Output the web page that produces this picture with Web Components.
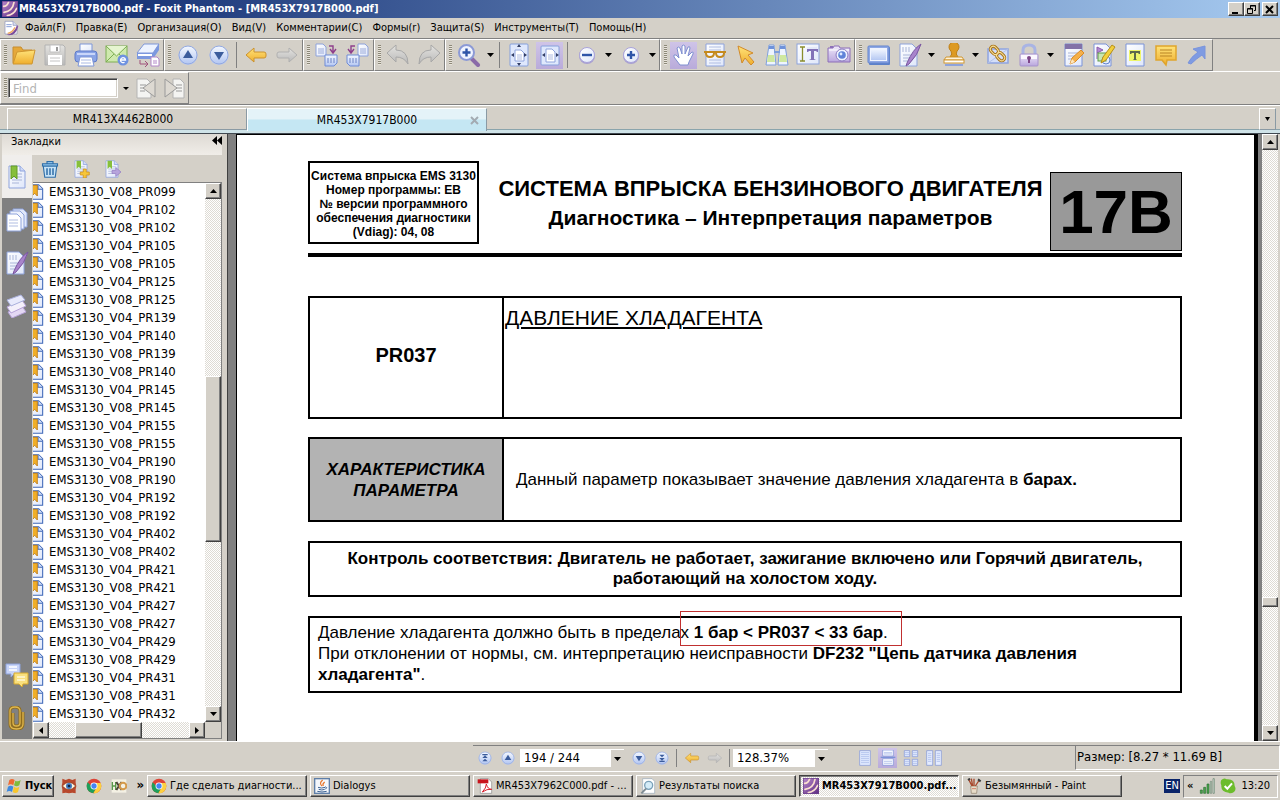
<!DOCTYPE html>
<html lang="ru">
<head>
<meta charset="utf-8">
<title>MR453X7917B000.pdf - Foxit Phantom</title>
<style>
    html, body {
        height: 100%;
    }
    body {
        margin: 0;
        overflow: hidden;
        font: 11px/14px "DejaVu Sans Condensed", "Open Sans", sans-serif;
        color: #000;
        background: #d4d0c8;
        --face: #d4d0c8;
        --shade: #808080;
        --dark: #404040;
    }
</style>
</head>
<body>
<pdf-app></pdf-app>

<script>
const DEFS = `
    <defs>
        <linearGradient id="gold" x1="0" y1="0" x2="0" y2="1"><stop offset="0" stop-color="#ffe37a"/><stop offset="1" stop-color="#efae2e"/></linearGradient>
        <linearGradient id="blue" x1="0" y1="0" x2="0" y2="1"><stop offset="0" stop-color="#f4f8ff"/><stop offset="1" stop-color="#b3c6f2"/></linearGradient>
        <linearGradient id="paper" x1="0" y1="0" x2="1" y2="1"><stop offset="0" stop-color="#fff"/><stop offset="1" stop-color="#dfe7fa"/></linearGradient>
        <linearGradient id="grey" x1="0" y1="0" x2="0" y2="1"><stop offset="0" stop-color="#e4e3e0"/><stop offset="1" stop-color="#b9b9b9"/></linearGradient>
        <linearGradient id="violet" x1="0" y1="0" x2="1" y2="1"><stop offset="0" stop-color="#b98acb"/><stop offset="1" stop-color="#5b2a80"/></linearGradient>
        <linearGradient id="lilac" x1="0" y1="0" x2="0" y2="1"><stop offset="0" stop-color="#f0eafb"/><stop offset="1" stop-color="#b9a6dd"/></linearGradient>
    </defs>`;

const SHEET = `<path d="M4 1h11l5 5v17H4z" fill="url(#paper)" stroke="#8ea3dc"/><path d="M15 1v5h5" fill="#cfdaf7" stroke="#8ea3dc"/>`;
const LINES = `<path d="M7 9h10M7 12h10M7 15h10M7 18h7" stroke="#a9b5d8"/>`;
const ROUND = `<circle cx="12" cy="12.500" r="9.500" fill="#b9c8ef"/><circle cx="12" cy="12" r="9" fill="url(#blue)" stroke="#93a9e0"/>`;
const CHROME = `<circle cx="12" cy="12" r="11" fill="#dd4437"/><path d="M2.500 6.500A11 11 0 0 0 11 23l5-9-7-1z" fill="#1ea05a"/><path d="M11 23A11 11 0 0 0 22 7.500H12l4.500 6z" fill="#fcd040"/><circle cx="12" cy="12" r="5.200" fill="#fff"/><circle cx="12" cy="12" r="4" fill="#4385f5"/>`;

const ICONS = {
    foxit: `<rect width="24" height="24" fill="url(#violet)"/><path d="M2 8Q8 8 10 1M3 17Q16 15 18 2M8 22Q18 20 22 11" fill="none" stroke="#fbe0d0" stroke-width="2.500" stroke-linecap="round"/><rect x=".500" y=".500" width="23" height="23" stroke="#6b3f8c"/>`,
    foxitDoc: `<path d="M3 2h12l6 6v13H3z" fill="#fff" stroke="#8a8fb5"/><path d="M15 2v6h6" fill="#d6dcf0" stroke="#8a8fb5"/><path d="M5 7h8M5 10h8" stroke="#8aa0d8" stroke-width="1.500"/><path d="M5 22Q16 22 21 8l2 1Q20 23 9 23z" fill="url(#violet)"/><path d="M7 20Q14 19 18 11" fill="none" stroke="#f0a860" stroke-width="2"/>`,
    open: `<path d="M1 20V4h8l2 3h9v13z" fill="#e5a83a" stroke="#c78c2e"/><path d="M1 21L5 9l18-2-3 14z" fill="url(#gold)" stroke="#cf9630"/>`,
    save: `<path d="M2 2h18l2 2v18H2z" fill="url(#grey)" stroke="#b2b2b2"/><path d="M7 2h10v7H7z" fill="#fff" stroke="#c0c0c0"/><path d="M13 4h2v4h-2z" fill="#999"/><path d="M5 12h14v10H5z" fill="#fff"/><path d="M7 15h10M7 18h10" stroke="#c4c4c4"/>`,
    print: `<path d="M6 1h12v9H6z" fill="url(#paper)" stroke="#7f97d8"/><rect x="1" y="8" width="22" height="11" rx="3" fill="#8aa4e6" stroke="#5d79c8"/><path d="M3 11h18" stroke="#c9d6fa" stroke-width="2"/><path d="M6 14h12l2 9H4z" fill="#fff" stroke="#7f97d8"/><path d="M7 17h10M7 20h10" stroke="#a9b9e4"/>`,
    mail: `<rect x="1" y="3" width="21" height="16" fill="#cfe9ae" stroke="#7cae52"/><path d="M1 3l10.500 10L22 3M1 19l8-8M22 19l-8-8" fill="#e6f5d0" stroke="#7cae52"/><circle cx="18" cy="17" r="5.500" fill="#6f92e0"/><path d="M15.500 17h5a2.500 2.500 0 1 0-1 2.200" fill="none" stroke="#fff" stroke-width="1.300"/>`,
    scan: `<path d="M1 10L8 1h15l-6 9z" fill="#edf3ff" stroke="#7f97d8"/><path d="M1 10h16l6-9v6l-6 9H1z" fill="#7c98df"/><path d="M2 12h14" stroke="#fff" stroke-width="2"/><path d="M4 17v4h8m-3-3l3 3-3 3" fill="none" stroke="#a0527a"/><path d="M15 14h6l2 2v7h-8z" fill="#fff" stroke="#b287c9"/><path d="M17 18h4M17 20h4" stroke="#b287c9"/>`,
    up: ROUND + `<path d="M12 7l5 8H7z" fill="#3b5c9c"/>`,
    down: ROUND + `<path d="M12 17l5-8H7z" fill="#3b5c9c"/>`,
    first: ROUND + `<path d="M8 6h8v2H8zM12 8l4 4H8zM12 13l4 4H8z" fill="#3b5c9c"/>`,
    last: ROUND + `<path d="M8 16h8v2H8zM12 16l4-4H8zM12 11l4-4H8z" fill="#3b5c9c"/>`,
    back: `<path d="M2 12l8-7v4h10q2 0 2 2v2q0 2-2 2H10v4z" fill="url(#gold)" stroke="#cb922f"/>`,
    forward: `<path d="M22 12l-8-7v4H4q-2 0-2 2v2q0 2 2 2h10v4z" fill="url(#grey)" stroke="#b0b0b0"/>`,
    copyOut: `<path d="M1 1h7l3 3v9H1z" fill="url(#paper)" stroke="#8ea3dc"/><path d="M3 6h6M3 8h6M3 10h6" stroke="#9aaada"/><path d="M14 3h4v6m-3-3l3 4 3-4" fill="none" stroke="#8e3f8c" stroke-width="1.400"/><path d="M10 12h12v8l-3 3h-9z" fill="url(#blue)" stroke="#6f8bd6"/><path d="M13 15v5M16 15v5M19 15v5" stroke="#6c82c4"/>`,
    copyIn: `<path d="M12 1h7l3 3v9H12z" fill="url(#paper)" stroke="#8ea3dc"/><path d="M14 6h6M14 8h6M14 10h6" stroke="#9aaada"/><path d="M9 3H5v6M2 6l3 4 3-4" fill="none" stroke="#8e3f8c" stroke-width="1.400"/><path d="M1 12h12v11H4l-3-3z" fill="url(#blue)" stroke="#6f8bd6"/><path d="M4 15v5M7 15v5M10 15v5" stroke="#6c82c4"/>`,
    undo: `<path d="M1 10l9-8v5q12 0 12 14-4-7-12-7v5z" fill="url(#grey)" stroke="#a8a8a8"/>`,
    redo: `<path d="M23 10l-9-8v5Q2 7 2 21q4-7 12-7v5z" fill="url(#grey)" stroke="#a8a8a8"/>`,
    zoom: `<path d="M14 15l7 7" stroke="#8a6aa8" stroke-width="4" stroke-linecap="round"/><circle cx="9.500" cy="9.500" r="7.500" fill="#f0f4ff" stroke="#8c9ad6" stroke-width="2"/><path d="M9.500 5.500v8M5.500 9.500h8" stroke="#2f55a8" stroke-width="2.400"/>`,
    fitPage: `<rect x="3" y="1" width="18" height="22" rx="1" fill="#dfe8fc" stroke="#86a0dc"/><path d="M8 7h6l3 3v8H8z" fill="#fff" stroke="#8ea3dc"/><path d="M10 12h5M10 14h5M10 16h5" stroke="#b0bde2"/><path d="M12 1l2 3h-4zM12 23l2-3h-4zM4 12l3-2v4zM20 12l-3-2v4z" fill="#333f66"/>`,
    fitWidth: `<rect x="3" y="3" width="18" height="19" rx="1" fill="#dfe8fc" stroke="#86a0dc"/><path d="M8 6h6l3 3v10H8z" fill="#fff" stroke="#8ea3dc"/><path d="M10 12h5M10 14h5M10 16h5" stroke="#b0bde2"/><path d="M4 12l3-2v4zM21 12l-3-2v4z" fill="#333f66"/>`,
    minus: `<circle cx="12" cy="13" r="8" fill="#a89fd0"/><circle cx="12" cy="12" r="7.500" fill="url(#paper)" stroke="#a9a3da"/><path d="M7 12h10" stroke="#2f55a8" stroke-width="2.400"/>`,
    plus: `<circle cx="12" cy="13" r="8" fill="#a89fd0"/><circle cx="12" cy="12" r="7.500" fill="url(#paper)" stroke="#a9a3da"/><path d="M8 12h8M12 8v8" stroke="#2f55a8" stroke-width="2.400"/>`,
    hand: `<path d="M8 22L2 14q-1-3 2-2l3 3L5 5q1-2 3 0l2 6V3q1-2 3 0v8l3-7q2-1 2 1l-2 8 4-4q2 0 1 2l-4 8-1 3z" fill="#fff" stroke="#7e8fd0"/>`,
    glasses: `<path d="M3 1h18v22H3z" fill="url(#paper)" stroke="#8ea3dc"/><path d="M6 4h12M6 7h12M6 17h12M6 20h12" stroke="#b0bde2"/><path d="M1 9h22M3 10q0 4 4 4t4-4M13 10q0 4 4 4t4-4" fill="none" stroke="#c58a1e" stroke-width="2"/>`,
    pointer: `<path d="M4 3l15 7-5 2 6 7-3 3-6-7-3 5z" fill="url(#gold)" stroke="#d18a2c"/>`,
    binocs: `<path d="M4 2h5l2 20H1zM15 2h5l3 20H13z" fill="#eef4ff" stroke="#7f9fdc"/><path d="M3 12h6l1 7H2zM15 12h6l1 7h-8z" fill="#cfe8a0"/><path d="M4 3h5v3H4zM15 3h5v3h-5z" fill="#6f92da"/><path d="M9 9h6" stroke="#7f9fdc" stroke-width="2"/>`,
    selectText: `<rect x="1" y="1" width="22" height="20" fill="url(#paper)" stroke="#8ea3dc"/><path d="M11 5h10M3 17h3" stroke="#d7def5"/><path d="M4 4h5M6.500 4v14M4 18h5" stroke="#8a8d2c" stroke-width="1.300"/><path d="M11 6h11v3h-1l-1-1h-2v8l2 1h-7l2-1V8h-2l-1 1h-1z" fill="#8272b8"/>`,
    camera: `<path d="M1 5h5l1-2h5l1 2h10v14H1z" fill="url(#lilac)" stroke="#8c6fb8"/><path d="M2 7h20" stroke="#fff"/><circle cx="15" cy="12" r="6" fill="#eef2ff" stroke="#8c7cc0"/><circle cx="15" cy="12" r="3.800" fill="#5f83d8"/><circle cx="14" cy="11" r="1.400" fill="#dfeaff"/><path d="M3 4h3" stroke="#8c6fb8" stroke-width="2"/>`,
    rect: `<rect x="2" y="4" width="21" height="18" rx="1" fill="#5d80c8"/><rect x="1" y="3" width="21" height="17" rx="1" fill="#8fa8e4" stroke="#6585cf"/><rect x="3.500" y="5.500" width="16" height="12" fill="url(#blue)" stroke="#f0f4ff"/>`,
    sign: `<path d="M2 1h12l5 5v17H2z" fill="url(#paper)" stroke="#8ea3dc"/><path d="M5 4v5M8 4v5M11 4v5M5 12h10M5 15h8M5 18h5" stroke="#a9b5d8"/><path d="M23 1Q15 6 9 20l-1 3 3-2Q20 12 23 1z" fill="#a884cc" stroke="#7a56a0"/>`,
    stamp: `<path d="M8 14q3-3 1-6a5 5 0 1 1 6 0q-2 3 1 6z" fill="#dd9a22" stroke="#bd7e14"/><path d="M4 14h16l2 3H2z" fill="#fff3d8" stroke="#cf9630"/><rect x="2" y="17" width="20" height="3" fill="#fff" stroke="#cf9630"/><path d="M3 22h18" stroke="#8ea3dc" stroke-width="2"/>`,
    link: `<path d="M2 6h20v14H2z" fill="#d4def8" stroke="#8fa4e0" stroke-width="1.500"/><path d="M2 20L22 6" stroke="#b4c2ea"/><g fill="none" stroke="#a87418" stroke-width="3"><rect x="4" y="4" width="9" height="6" rx="3" transform="rotate(45 8 7)"/><rect x="10" y="11" width="9" height="6" rx="3" transform="rotate(45 15 14)"/></g><g fill="none" stroke="#f7df9a"><rect x="4" y="4" width="9" height="6" rx="3" transform="rotate(45 8 7)"/><rect x="10" y="11" width="9" height="6" rx="3" transform="rotate(45 15 14)"/></g>`,
    lock: `<path d="M6 12V7q0-5 6-5t6 5v5" fill="none" stroke="#a9b4e4" stroke-width="3"/><rect x="3" y="11" width="18" height="12" rx="1" fill="url(#lilac)" stroke="#a793cc"/><path d="M4 12h16v4H4z" fill="#fbf8ff"/><circle cx="12" cy="15" r="2" fill="#7d4688"/><path d="M11 15h2v5h-2z" fill="#7d4688"/>`,
    note: `<path d="M4 1h17v22H4z" fill="url(#paper)" stroke="#7b93d8"/><path d="M4 1h17v5H4z" fill="#8272a8"/><path d="M7 10h11M7 13h9M7 16h5" stroke="#a9b5d8"/><path d="M9 21l2-6 9-8 3 3-9 9z" fill="#f5b04a" stroke="#d98a24"/><path d="M9 21l2-5 3 3z" fill="#fbe6c0"/>`,
    edit: `<path d="M2 1h12l5 5v17H2z" fill="url(#paper)" stroke="#7b93d8"/><path d="M5 4v12M5 4l6 3-6 3" fill="#b48ad0" stroke="#8a5cae"/><rect x="6" y="10" width="8" height="8" fill="#c8e6b4" stroke="#5f9c4a"/><circle cx="14" cy="17" r="4" fill="none" stroke="#5f83cf"/><path d="M9 20l2-6L20 2l3 2-9 13z" fill="#f2cf3c" stroke="#b89018"/>`,
    highlight: `<path d="M3 1h18v22H3z" fill="url(#paper)" stroke="#7b93d8"/><path d="M6 7h12v11H6z" fill="#eef66a"/><path d="M7 8h10v3h-1l-1-1h-2v6l1 1h-4l1-1v-6H9l-1 1H7z" fill="#5c6a4c"/>`,
    comment: `<path d="M2 3h20v14h-9l-1 5-4-5H2z" fill="url(#gold)" stroke="#e0a52c" stroke-width="1.500"/><path d="M6 7h12M6 10h12M6 13h12" stroke="#b98424"/>`,
    arrow: `<path d="M3 20Q6 14 13 9L8 6l12-3v13l-3-4Q11 16 6 21z" fill="#7f9be2" stroke="#7a94dc"/>`,
    findPrev: `<path d="M3 3h10l4 4v15H3z" fill="#f4f4f2" stroke="#b4b4b4"/><path d="M6 9h6M6 12h5M6 15h5" stroke="#999"/><path d="M21 3v18L9 12z" fill="#ddd9d2" stroke="#9a9a9a"/>`,
    findNext: `<path d="M11 3h7l4 4v15H11z" fill="#f4f4f2" stroke="#b4b4b4"/><path d="M14 9h6M14 12h6M14 15h6" stroke="#999"/><path d="M3 3v18l12-9z" fill="#ddd9d2" stroke="#9a9a9a"/>`,
    bookmark: `<path d="M3 1h13l6 6v16H3z" fill="url(#paper)" stroke="#3f68b8" stroke-width="1.600"/><path d="M15 1v7h7" fill="#d4e0f8" stroke="#3f68b8" stroke-width="1.600"/><path d="M6 2h8v16l-4-4-4 4z" fill="#f0ae28" stroke="#b8740c" stroke-width="1.200"/>`,
    marks: SHEET + LINES + `<path d="M6 1h6v13l-3-3-3 3z" fill="#86bf3c" stroke="#649c28"/>`,
    marksAdd: SHEET + LINES + `<path d="M6 1h6v11l-3-3-3 3z" fill="#86bf3c"/><path d="M15 12h4v4h4v4h-4v4h-4v-4h-4v-4h4z" fill="#f7c63a" stroke="#cb8f1e"/>`,
    marksGo: SHEET + LINES + `<path d="M6 1h6v11l-3-3-3 3z" fill="#86bf3c"/><path d="M12 14h5v-4l7 6-7 6v-4h-5z" fill="#b7a4dc" stroke="#9580c4"/>`,
    trash: `<path d="M3 8h18l-2 15H5z" fill="#c6e2f6" stroke="#2f6ea8" stroke-width="1.500"/><path d="M8 11v9M12 11v9M16 11v9" stroke="#2f6ea8" stroke-width="2"/><path d="M2 5h20v3H2zM8 5V2h8v3" fill="#8fc2e8" stroke="#2f6ea8" stroke-width="1.500"/>`,
    pages: `<path d="M8 1h10l4 4v14H8z" fill="#dfe7fa" stroke="#8ea3dc"/><path d="M5 3h10l4 4v14H5z" fill="#eef2fc" stroke="#8ea3dc"/><path d="M2 6h10l4 4v13H2z" fill="#fff" stroke="#8ea3dc"/><path d="M4 12h9M4 15h9M4 18h9" stroke="#b0bde2"/>`,
    layers: `<path d="M3 18l14-6 4 6-14 6z" fill="#e4d8f4" stroke="#b6a2d8"/><path d="M2 13l15-7 4 6-15 7z" fill="#f4f0fb" stroke="#b6a2d8"/><path d="M2 6l14-5 4 5-14 6z" fill="#e8eafc" stroke="#a9b0dc"/>`,
    comments: `<path d="M1 1h14v10H9l-3 3v-3H1z" fill="#c8d4f8" stroke="#8ea3dc"/><path d="M4 4h8M4 7h8" stroke="#fff" stroke-width="1.500"/><path d="M9 10h14v11h-5l-1 3-3-3H9z" fill="#f9e07e" stroke="#d8a92c"/><path d="M12 14h8M12 17h8" stroke="#fff8d8" stroke-width="1.500"/>`,
    clip: `<path d="M8 7v10q0 3 3.500 3t3.500-3V5q0-4-5-4T5 5v13q0 5 6.500 5T18 18V6" fill="none" stroke="#8f6c1c" stroke-width="3"/><path d="M8 7v10q0 3 3.500 3t3.500-3V5q0-4-5-4T5 5v13q0 5 6.500 5T18 18V6" fill="none" stroke="#e0b850" stroke-width="1.300"/>`,
    onePage: `<path d="M4 1h16v22H4z" fill="#e4ecff" stroke="#7b93d8"/><path d="M6 4h12M6 7h12M6 10h12M6 13h12M6 16h12M6 19h12" stroke="#9db0e4"/>`,
    flowPage: `<path d="M4 0h16v9H4zM4 13h16v10H4z" fill="#f6f9ff" stroke="#7b93d8"/><path d="M6 4h12M6 6h12M6 17h12M6 20h12" stroke="#9db0e4"/><path d="M1 11h22" stroke="#7b93d8" stroke-width="2"/>`,
    fourPage: `<path d="M2 1h8v9H2zM14 1h8v9h-8zM2 14h8v9H2zM14 14h8v9h-8z" fill="#e4ecff" stroke="#7b93d8"/><path d="M3 4h6M3 7h6M15 4h6M15 7h6M3 17h6M3 20h6M15 17h6M15 20h6" stroke="#9db0e4"/>`,
    twoPage: `<path d="M1 1h9v22H1zM14 1h9v22h-9z" fill="#e4ecff" stroke="#7b93d8"/><path d="M3 5h5M3 8h5M3 11h5M3 14h5M3 17h5M16 5h5M16 8h5M16 11h5M16 14h5M16 17h5" stroke="#9db0e4"/>`,
    windows: `<path d="M5 3q4-3 8 0l-2 8q-4-3-8 0z" fill="#ee6a34"/><path d="M14 4q4 2 8-1l-2 8q-4 3-8 0z" fill="#7fbb3c"/><path d="M3 13q4-3 8 0l-2 8q-4-3-8 0z" fill="#3f8ae0"/><path d="M12 13q4 3 8 0l-2 8q-4 3-8 0z" fill="#f8c62c"/>`,
    viewer: `<path d="M2 1l5 2 5-2 5 2 5-2v6l1 5-1 5v6l-5-1-5 1-5-1-5 1v-6l-1-5 1-5z" fill="#b8482c"/><path d="M2 12q10-11 20 0-10 11-20 0z" fill="#fff3dc" stroke="#7a3018"/><circle cx="12" cy="12" r="4.500" fill="#3f78c0"/><circle cx="12" cy="12" r="2" fill="#14243c"/>`,
    chrome: CHROME,
    hex: `<path d="M1 2h22v20H1z" fill="#f4f1e4"/><path d="M2 6v12M2 12h6M7 6v12" stroke="#5a9a4c" stroke-width="2"/><path d="M8 6l8 12M16 6L8 18" stroke="#4c4038" stroke-width="3"/><circle cx="18" cy="12" r="5" fill="none" stroke="#d49a4c" stroke-width="3"/>`,
    java: `<rect x="1" y="1" width="22" height="22" fill="#f4f7fb" stroke="#5f7fa8" stroke-width="2"/><path d="M13 3q-6 5-1 9M16 6q-4 3-2 6" fill="none" stroke="#e8762c" stroke-width="1.800"/><path d="M6 14q5 2 11 0M7 17q5 2 9 0M5 20q7 2 14 0M17 13q4 1 0 4" fill="none" stroke="#3f6494" stroke-width="1.500"/>`,
    pdf: `<path d="M5 1h12l5 5v17H5z" fill="#fff" stroke="#888"/><path d="M1 2h16v6H1z" fill="#c8141c"/><path d="M8 21q6-6 6-12 2 8 8 8-7-1-14 4z" fill="none" stroke="#d8202c" stroke-width="1.500"/>`,
    search: `<path d="M4 1h14l4 4v18H4z" fill="#fff" stroke="#9ab"/><circle cx="13" cy="11" r="6" fill="#d4ecf8" stroke="#7aa0b8" stroke-width="2"/><path d="M9 16l-7 7" stroke="#7f8c94" stroke-width="3"/>`,
    paint: `<path d="M7 12h10l-1 11H8z" fill="#e8dcc8" stroke="#8c7c68"/><path d="M9 12L4 2M12 12V1M14 12l6-9M10 12L8 1" stroke="#a8482c" stroke-width="2"/><path d="M3 3l3-2M18 2l4 3" stroke="#3c3c3c" stroke-width="3"/><path d="M9 16h6" stroke="#c8583c"/>`,
    signal: `<path d="M2 18h3v5H2zM7 14h3v9H7zM12 9h3v14h-3z" fill="#4ca84c" stroke="#2c6c34"/><path d="M17 5h2v18h-2zM21 1h2v22h-2z" fill="#dfe8dc" stroke="#64806c"/>`,
    skype: `<path d="M2 3q4-4 8-1 12-1 12 10 3 5-1 9-5 3-8 1Q1 21 2 11q-2-4 0-8z" fill="#6cbc2c"/><path d="M7 12l4 4 7-8" fill="none" stroke="#fff" stroke-width="3"/>`
};

const BOOKMARKS = [
    "V08_PR099", "V04_PR102", "V08_PR102", "V04_PR105", "V08_PR105", "V04_PR125",
    "V08_PR125", "V04_PR139", "V04_PR140", "V08_PR139", "V08_PR140", "V04_PR145",
    "V08_PR145", "V04_PR155", "V08_PR155", "V04_PR190", "V08_PR190", "V04_PR192",
    "V08_PR192", "V04_PR402", "V08_PR402", "V04_PR421", "V08_PR421", "V04_PR427",
    "V08_PR427", "V04_PR429", "V08_PR429", "V04_PR431", "V08_PR431", "V04_PR432"
];

const RESET = `
    * {
        box-sizing: border-box;
    }
    button, input, select {
        font: inherit;
        color: inherit;
        margin: 0;
        padding: 0;
        border: 0;
        border-radius: 0;
        background: none;
    }
    .raised {
        background: var(--face);
        border: 1px solid;
        border-color: #fff var(--dark) var(--dark) #fff;
        box-shadow: inset -1px -1px var(--shade);
    }`;

class BaseElement extends HTMLElement {

    constructor() {
        super();
        this.shadowDOM = this.attachShadow({ mode: "open" });
    }

    connectedCallback() {
        this.render();
    }

    attr(name, fallback = "") {
        return this.getAttribute(name) || fallback;
    }
}

class UiIcon extends BaseElement {
    render() {
        this.shadowDOM.innerHTML = `
            <style>
                :host {
                    display: block;
                    flex: none;
                    width: var(--icon-size, 24px);
                    height: var(--icon-size, 24px);
                }
                svg {
                    display: block;
                    width: 100%;
                    height: 100%;
                }
            </style>
            <svg viewBox="0 0 24 24" fill="none" aria-hidden="true">${DEFS}${ICONS[this.attr("name")]}</svg>`;
    }
}
customElements.define("ui-icon", UiIcon);

class ToolButton extends BaseElement {
    render() {
        this.shadowDOM.innerHTML = `
            <style>
                ${RESET}
                :host {
                    display: flex;
                    align-items: center;
                }
                .tool {
                    display: grid;
                    place-items: center;
                    width: var(--tool-width, 31px);
                    height: var(--tool-height, 27px);
                }
                :host([active]) .tool {
                    background: linear-gradient(#cfc4e8, #b9abda) center / calc(100% - 4px) 100% no-repeat;
                }
                .more {
                    display: grid;
                    place-items: center;
                    width: 13px;
                    height: 27px;
                }
            </style>
            <button class="tool" aria-label="${this.attr("icon")}"><ui-icon name="${this.attr("icon")}"></ui-icon></button>
            ${this.hasAttribute("menu") ? `<button class="more" aria-label="menu"><svg width="7" height="4"><path d="M0 0h7L3.500 4z"/></svg></button>` : ""}`;
    }
}
customElements.define("tool-button", ToolButton);

class ToolGroup extends BaseElement {
    render() {
        this.shadowDOM.innerHTML = `
            <style>
                :host {
                    display: flex;
                    align-items: center;
                    height: 32px;
                    border: 1px solid;
                    border-color: #fff var(--shade) var(--shade) #fff;
                    box-sizing: border-box;
                }
                .grip {
                    width: 3px;
                    height: 20px;
                    margin: 0 1px 0 3px;
                    background: repeating-linear-gradient(#8c8878 0 1px, #e8e4dc 1px 2px);
                }
                ::slotted(hr) {
                    width: 1px;
                    height: 26px;
                    margin: 0 3px 0 2px;
                    border: 0;
                    background: #808080;
                }
            </style>
            <div class="grip"></div>
            <slot></slot>`;
    }
}
customElements.define("tool-group", ToolGroup);

class TitleBar extends BaseElement {
    render() {
        this.shadowDOM.innerHTML = `
            <style>
                ${RESET}
                :host {
                    display: flex;
                    align-items: center;
                    height: 18px;
                    padding: 0 2px 0 2px;
                    color: #fff;
                    font-weight: bold;
                    background: linear-gradient(90deg, #0a246a, #a6caf0);
                    --icon-size: 16px;
                }
                h1 {
                    flex: 1;
                    margin: 0 0 0 1px;
                    font-size: 11px;
                    white-space: nowrap;
                }
                button {
                    display: grid;
                    place-items: center;
                    width: 16px;
                    height: 14px;
                    color: #000;
                }
                button:last-of-type {
                    margin-left: 2px;
                }
                svg {
                    display: block;
                }
            </style>
            <ui-icon name="foxit"></ui-icon>
            <h1><slot></slot></h1>
            <button class="raised" aria-label="Свернуть"><svg width="10" height="9"><path d="M1 7h6v2H1z"/></svg></button>
            <button class="raised" aria-label="Восстановить"><svg width="10" height="9" fill="none" stroke="#000"><path d="M3.500 3V.500h5v5H7M3 1h6M1 4h5M.500 3.500h5v5h-5z"/></svg></button>
            <button class="raised" aria-label="Закрыть"><svg width="10" height="9"><path d="M1 1l7 7M8 1L1 8" stroke="#000" stroke-width="2"/></svg></button>`;
    }
}
customElements.define("title-bar", TitleBar);

class MenuBar extends BaseElement {
    render() {
        const items = ["Файл(F)", "Правка(E)", "Организация(O)", "Вид(V)", "Комментарии(C)", "Формы(r)", "Защита(S)", "Инструменты(T)", "Помощь(H)"];
        this.shadowDOM.innerHTML = `
            <style>
                ${RESET}
                :host {
                    display: flex;
                    align-items: center;
                    height: 21px;
                    padding-left: 3px;
                    border-bottom: 1px solid var(--shade);
                    box-sizing: border-box;
                    --icon-size: 16px;
                }
                nav {
                    display: flex;
                    margin-left: 1px;
                }
                button {
                    padding: 0 5px;
                }
            </style>
            <ui-icon name="foxitDoc"></ui-icon>
            <nav>${items.map(item => `<button>${item}</button>`).join("")}</nav>`;
    }
}
customElements.define("menu-bar", MenuBar);

class ToolBars extends BaseElement {
    render() {
        this.shadowDOM.innerHTML = `
            <style>
                ${RESET}
                :host {
                    display: block;
                }
                .row {
                    display: flex;
                    height: 33px;
                    border-bottom: 1px solid #fff;
                }
                .row + .row {
                    border-bottom: 1px solid var(--shade);
                }
                .find {
                    display: flex;
                    align-items: center;
                    --tool-width: 28px;
                }
                input {
                    width: 110px;
                    height: 20px;
                    padding: 0 4px;
                    font-size: 13px;
                    background: #fff;
                    border: 1px solid;
                    border-color: var(--shade) #fff #fff var(--shade);
                    box-shadow: inset 1px 1px var(--dark), inset -1px -1px var(--face);
                }
                input::placeholder {
                    color: #b4b4b4;
                    opacity: 1;
                }
                .more {
                    width: 14px;
                    height: 20px;
                }
            </style>
            <div class="row">
                <tool-group>
                    <tool-button icon="open"></tool-button>
                    <tool-button icon="save"></tool-button>
                    <tool-button icon="print"></tool-button>
                    <tool-button icon="mail"></tool-button>
                    <tool-button icon="scan"></tool-button>
                </tool-group>
                <tool-group>
                    <tool-button icon="up"></tool-button>
                    <tool-button icon="down"></tool-button>
                    <hr>
                    <tool-button icon="back"></tool-button>
                    <tool-button icon="forward"></tool-button>
                </tool-group>
                <tool-group>
                    <tool-button icon="copyOut"></tool-button>
                    <tool-button icon="copyIn"></tool-button>
                </tool-group>
                <tool-group>
                    <tool-button icon="undo"></tool-button>
                    <tool-button icon="redo"></tool-button>
                </tool-group>
                <tool-group>
                    <tool-button icon="zoom" menu></tool-button>
                    <hr>
                    <tool-button icon="fitPage"></tool-button>
                    <tool-button icon="fitWidth" active></tool-button>
                    <hr>
                    <tool-button icon="minus" menu></tool-button>
                    <tool-button icon="plus" menu></tool-button>
                </tool-group>
                <tool-group>
                    <tool-button icon="hand" active></tool-button>
                    <tool-button icon="glasses"></tool-button>
                    <tool-button icon="pointer"></tool-button>
                    <tool-button icon="binocs"></tool-button>
                    <tool-button icon="selectText"></tool-button>
                    <tool-button icon="camera"></tool-button>
                </tool-group>
                <tool-group>
                    <tool-button icon="rect"></tool-button>
                    <tool-button icon="sign" menu></tool-button>
                    <tool-button icon="stamp" menu></tool-button>
                    <tool-button icon="link"></tool-button>
                    <tool-button icon="lock" menu></tool-button>
                    <tool-button icon="note"></tool-button>
                    <tool-button icon="edit"></tool-button>
                    <tool-button icon="highlight"></tool-button>
                    <tool-button icon="comment"></tool-button>
                    <tool-button icon="arrow"></tool-button>
                </tool-group>
            </div>
            <div class="row">
                <tool-group>
                    <div class="find">
                        <input type="text" placeholder="Find" aria-label="Find">
                        <button class="more" aria-label="menu"><svg width="7" height="4"><path d="M1 0h6L4 3z"/></svg></button>
                        <tool-button icon="findPrev"></tool-button>
                        <tool-button icon="findNext"></tool-button>
                    </div>
                </tool-group>
            </div>`;
    }
}
customElements.define("tool-bars", ToolBars);

class DocTabs extends BaseElement {
    render() {
        this.shadowDOM.innerHTML = `
            <style>
                ${RESET}
                :host {
                    display: flex;
                    height: 29px;
                    padding: 2px 4px 0 7px;
                    border-top: 1px solid #fff;
                    border-bottom: 1px solid #404850;
                    box-sizing: border-box;
                    background: linear-gradient(#8aa4ac, #8aa4ac) 0 23px / 100% 1px no-repeat,
                        linear-gradient(#cfe3e8, #cfe3e8) 0 24px / 100% 3px no-repeat;
                }
                button {
                    flex: 0 1 240px;
                    height: 22px;
                    padding-right: 8px;
                    font-size: 12px;
                    border: 1px solid;
                    border-color: #fff #8a9aa4 #8a9aa4 #fff;
                }
                .on {
                    display: grid;
                    height: 23px;
                    grid-template-columns: 16px 1fr 8px;
                    place-items: center;
                    border-bottom: 0;
                    background: linear-gradient(#e4f3f8 45%, #c5e7f3 50%);
                }
                .on span {
                    grid-column: 2;
                }
                .list {
                    flex: 0 0 17px;
                    padding: 0;
                    margin-left: auto;
                    display: grid;
                    place-items: center;
                }
            </style>
            <button>MR413X4462B000</button>
            <button class="on"><span>MR453X7917B000</span><svg width="9" height="9"><path d="M1 1l7 7M8 1L1 8" stroke="#a3abb2" stroke-width="2"/></svg></button>
            <button class="list" aria-label="Вкладки"><svg width="5" height="4"><path d="M0 0h5L2.500 4z"/></svg></button>`;
    }
}
customElements.define("doc-tabs", DocTabs);

/* Thumb place and length come from the before / size / after attributes, as flex weights. */
class ScrollBar extends BaseElement {
    render() {
        const side = this.hasAttribute("horizontal");
        const arrows = side ? ["M5 0v7L1 3.500z", "M1 0v7l4-3.500z"] : ["M0 5h7L3.500 1z", "M0 1h7L3.500 5z"];
        this.shadowDOM.innerHTML = `
            <style>
                ${RESET}
                :host {
                    display: flex;
                    flex-direction: ${side ? "row" : "column"};
                    background: repeating-conic-gradient(#fff 0 25%, #dedbd4 0 50%) 0 0 / 2px 2px;
                }
                button {
                    flex: 0 0 16px;
                    ${side ? "height" : "width"}: 16px;
                    display: grid;
                    place-items: center;
                }
                .thumb {
                    flex: ${this.attr("size")} 1 0;
                }
                .before {
                    flex: ${this.attr("before")} 1 0;
                }
                .after {
                    flex: ${this.attr("after")} 1 0;
                }
            </style>
            <button class="raised" aria-label="Назад"><svg width="7" height="7"><path d="${arrows[0]}"/></svg></button>
            <div class="before"></div>
            <div class="thumb raised"></div>
            <div class="after"></div>
            <button class="raised" aria-label="Вперёд"><svg width="7" height="7"><path d="${arrows[1]}"/></svg></button>`;
    }
}
customElements.define("scroll-bar", ScrollBar);

class BookmarkPanel extends BaseElement {
    render() {
        this.shadowDOM.innerHTML = `
            <style>
                ${RESET}
                :host {
                    display: grid;
                    grid-template: 21px 1fr / 30px 1fr;
                    padding: 0 5px 2px 2px;
                    border-right: 1px solid var(--dark);
                    box-sizing: border-box;
                    background: var(--face);
                }
                header {
                    grid-column: 1 / -1;
                    display: flex;
                    justify-content: space-between;
                    padding: 1px 0 0 9px;
                    background: linear-gradient(#dedad4, #f0ede8);
                }
                h2 {
                    margin: 0;
                    font-size: 11px;
                    line-height: 14px;
                    font-weight: normal;
                }
                header button {
                    height: 14px;
                }
                .side {
                    display: flex;
                    flex-direction: column;
                    background: #808080;
                }
                .side button {
                    display: grid;
                    place-items: center;
                    height: 43px;
                }
                .side .on {
                    background: #f0eeec;
                }
                .side .gap {
                    flex: 1;
                }
                .tools {
                    display: flex;
                    align-items: center;
                    height: 27px;
                    padding-left: 2px;
                    --icon-size: 18px;
                }
                .content {
                    display: flex;
                    flex-direction: column;
                    min-height: 0;
                }
                .list {
                    flex: 1;
                    min-height: 0;
                    display: grid;
                    grid-template: 1fr 16px / 1fr 16px;
                    margin-left: 1px;
                    border: 1px solid var(--shade);
                    border-left: 0;
                }
                ul {
                    margin: 0;
                    padding: 0;
                    overflow: hidden;
                    list-style: none;
                    background: #fff;
                    font-size: 13px;
                    --icon-size: 16px;
                }
                li a {
                    display: flex;
                    align-items: center;
                    gap: 5px;
                    height: 18px;
                    color: #000;
                    text-decoration: none;
                    white-space: nowrap;
                }
                li ui-icon {
                    margin-left: -5px;
                }
            </style>
            <header><h2>Закладки</h2><button aria-label="Свернуть"><svg width="10" height="9"><path d="M5 0v9L0 4.500zM10 0v9L5 4.500z"/></svg></button></header>
            <div class="side">
                <button class="on" aria-label="Закладки"><ui-icon name="marks"></ui-icon></button>
                <button aria-label="Страницы"><ui-icon name="pages"></ui-icon></button>
                <button aria-label="Подписи"><ui-icon name="sign"></ui-icon></button>
                <button aria-label="Слои"><ui-icon name="layers"></ui-icon></button>
                <div class="gap"></div>
                <button aria-label="Комментарии"><ui-icon name="comments"></ui-icon></button>
                <button aria-label="Вложения"><ui-icon name="clip"></ui-icon></button>
            </div>
            <div class="content">
                <div class="tools">
                    <tool-button icon="trash"></tool-button>
                    <tool-button icon="marksAdd"></tool-button>
                    <tool-button icon="marksGo"></tool-button>
                </div>
                <div class="list">
                    <ul>${BOOKMARKS.map(name => `<li><a href="#${name}"><ui-icon name="bookmark"></ui-icon>EMS3130_${name}</a></li>`).join("")}</ul>
                    <scroll-bar before="178" size="165" after="165"></scroll-bar>
                    <scroll-bar horizontal before="26" size="66" after="48"></scroll-bar>
                </div>
            </div>`;
    }
}
customElements.define("bookmark-panel", BookmarkPanel);

class PdfPage extends BaseElement {
    render() {
        this.shadowDOM.innerHTML = `
            <style>
                ${RESET}
                :host {
                    display: block;
                    overflow: hidden;
                    padding: 26px 72px 0 71px;
                    border: 1px solid #000;
                    border-width: 1px 4px 0 1px;
                    box-sizing: border-box;
                    background: #fff;
                    font: 17px/21px "Liberation Sans", Arial, sans-serif;
                }
                header {
                    display: grid;
                    grid-template-columns: 171px 1fr 132px;
                    padding-bottom: 2px;
                    border-bottom: 4px solid #000;
                }
                .system {
                    align-self: start;
                    margin: 0;
                    padding: 6px 0 3px;
                    border: 2px solid #000;
                    font-size: 12px;
                    line-height: 14px;
                    font-weight: bold;
                    text-align: center;
                    white-space: nowrap;
                }
                .name {
                    display: flex;
                    flex-direction: column;
                    align-items: center;
                    padding: 13px 0 0 12px;
                    white-space: nowrap;
                    font-weight: bold;
                    font-size: 21px;
                    line-height: 29px;
                }
                .name h2, .name p {
                    margin: 0;
                }
                .name h2 {
                    font-size: 22px;
                }
                .badge {
                    display: grid;
                    place-items: center;
                    height: 79px;
                    margin-top: 11px;
                    border: 1px solid #000;
                    background: #999;
                    font-size: 62px;
                    font-weight: bold;
                }
                table {
                    width: 100%;
                    border-collapse: collapse;
                }
                th, td {
                    border: 2px solid #000;
                    text-align: left;
                }
                th {
                    width: 194px;
                    padding: 0;
                    text-align: center;
                }
                .code {
                    margin-top: 39px;
                }
                .code th {
                    height: 121px;
                    padding-bottom: 4px;
                    font-size: 20px;
                }
                .code td {
                    padding: 9px 1px;
                    vertical-align: top;
                    font-size: 21px;
                    text-decoration: underline;
                }
                .about {
                    margin-top: 18px;
                }
                .about th {
                    height: 83px;
                    background: #b3b3b3;
                    font-style: italic;
                }
                .about td {
                    padding: 0 12px;
                }
                .box {
                    margin: 19px 0 0;
                    border: 2px solid #000;
                }
                .check {
                    padding: 6px 20px;
                    line-height: 20px;
                    font-weight: bold;
                    text-align: center;
                }
                .range {
                    padding: 4px 8px 6px;
                }
                .mark {
                    position: relative;
                }
                .mark::after {
                    content: "";
                    position: absolute;
                    inset: -12px -14px -4px -14px;
                    border: 1px solid #c03030;
                }
            </style>
            <header>
                <p class="system">Система впрыска EMS 3130<br>Номер программы: EB<br>№ версии программного<br>обеспечения диагностики<br>(Vdiag): 04, 08</p>
                <div class="name"><h2>СИСТЕМА ВПРЫСКА БЕНЗИНОВОГО ДВИГАТЕЛЯ</h2><p>Диагностика – Интерпретация параметров</p></div>
                <div class="badge">17B</div>
            </header>
            <table class="code"><tr><th>PR037</th><td>ДАВЛЕНИЕ ХЛАДАГЕНТА</td></tr></table>
            <table class="about"><tr><th>ХАРАКТЕРИСТИКА<br>ПАРАМЕТРА</th><td>Данный параметр показывает значение давления хладагента в <b>барах.</b></td></tr></table>
            <p class="box check">Контроль соответствия: Двигатель не работает, зажигание включено или Горячий двигатель,<br>работающий на холостом ходу.</p>
            <p class="box range">Давление хладагента должно быть в пределах <span class="mark"><b>1 бар &lt; PR037 &lt; 33 бар</b>.</span><br>При отклонении от нормы, см. интерпретацию неисправности <b>DF232 "Цепь датчика давления<br>хладагента"</b>.</p>`;
    }
}
customElements.define("pdf-page", PdfPage);

class ComboBox extends BaseElement {
    render() {
        this.shadowDOM.innerHTML = `
            <style>
                ${RESET}
                :host {
                    display: block;
                    position: relative;
                }
                select {
                    display: block;
                    width: 100%;
                    height: 18px;
                    padding-left: 4px;
                    appearance: none;
                    background: #fff;
                }
                svg {
                    position: absolute;
                    top: 1px;
                    right: 0;
                    background: var(--face);
                    pointer-events: none;
                }
            </style>
            <select aria-label="${this.attr("label")}"><option>${this.attr("value")}</option></select>
            <svg width="13" height="17"><path d="M3 7h7L6.500 11z"/></svg>`;
    }
}
customElements.define("combo-box", ComboBox);

class StatusBar extends BaseElement {
    render() {
        this.shadowDOM.innerHTML = `
            <style>
                ${RESET}
                :host {
                    display: flex;
                    justify-content: flex-end;
                    height: 30px;
                    padding-top: 3px;
                    border-top: 1px solid #fff;
                    box-sizing: border-box;
                    font-size: 13px;
                }
                .tools {
                    display: flex;
                    align-items: center;
                    width: 602px;
                    padding-bottom: 2px;
                    border-top: 1px solid var(--shade);
                    --tool-width: 23px;
                    --tool-height: 20px;
                    --icon-size: 16px;
                }
                hr {
                    width: 1px;
                    height: 18px;
                    margin: 0 3px;
                    border: 0;
                    background: #808080;
                }
                .page {
                    width: 104px;
                    margin: 0 3px 0 1px;
                }
                .zoom {
                    width: 95px;
                    margin-right: 25px;
                }
                .size {
                    width: 205px;
                    padding: 4px 0 0 1px;
                    border: 1px solid;
                    border-color: var(--shade) #fff #fff var(--shade);
                    margin-bottom: 1px;
                    white-space: nowrap;
                }
            </style>
            <div class="tools">
                <tool-button icon="first"></tool-button>
                <tool-button icon="up"></tool-button>
                <combo-box class="page" label="Страница" value="194 / 244"></combo-box>
                <tool-button icon="down"></tool-button>
                <tool-button icon="last"></tool-button>
                <hr>
                <tool-button icon="back"></tool-button>
                <tool-button icon="forward"></tool-button>
                <hr>
                <combo-box class="zoom" label="Масштаб" value="128.37%"></combo-box>
                <tool-button icon="onePage"></tool-button>
                <tool-button icon="flowPage" active></tool-button>
                <tool-button icon="fourPage"></tool-button>
                <tool-button icon="twoPage"></tool-button>
            </div>
            <div class="size">Размер: [8.27 * 11.69 В]</div>`;
    }
}
customElements.define("status-bar", StatusBar);

class TaskButton extends BaseElement {
    render() {
        this.shadowDOM.innerHTML = `
            <style>
                ${RESET}
                :host {
                    display: block;
                    flex: 0 1 160px;
                    min-width: 0;
                    --icon-size: 16px;
                }
                button {
                    display: flex;
                    align-items: center;
                    gap: 3px;
                    width: 100%;
                    height: 22px;
                    padding: 0 3px;
                    white-space: nowrap;
                }
                :host([active]) button {
                    font-weight: bold;
                    background: repeating-conic-gradient(#fff 0 25%, #dedbd4 0 50%) 0 0 / 2px 2px;
                    border-color: var(--dark) #fff #fff var(--dark);
                    box-shadow: inset 1px 1px var(--shade);
                }
                :host([start]) {
                    flex: 0 0 52px;
                    font-weight: bold;
                }
            </style>
            <button class="raised"><ui-icon name="${this.attr("icon")}"></ui-icon><slot></slot></button>`;
    }
}
customElements.define("task-button", TaskButton);

class TaskBar extends BaseElement {
    render() {
        this.shadowDOM.innerHTML = `
            <style>
                ${RESET}
                :host {
                    display: flex;
                    align-items: center;
                    gap: 3px;
                    height: 29px;
                    padding: 0 2px;
                    border-top: 1px solid #fff;
                    box-sizing: border-box;
                    --icon-size: 16px;
                }
                .quick {
                    display: flex;
                    align-items: center;
                    justify-content: space-between;
                    width: 87px;
                    padding: 0 0 0 4px;
                }
                .quick a {
                    display: block;
                }
                .more {
                    align-self: flex-start;
                    font-weight: bold;
                    font-size: 13px;
                }
                .lang {
                    margin-left: auto;
                    padding: 0 1px;
                    color: #fff;
                    background: #0a246a;
                }
                .tray {
                    display: flex;
                    align-items: center;
                    justify-content: space-between;
                    width: 95px;
                    height: 23px;
                    padding: 0 7px 0 3px;
                    border: 1px solid;
                    border-color: var(--shade) #fff #fff var(--shade);
                }
            </style>
            <task-button start icon="windows">Пуск</task-button>
            <div class="quick">
                <a href="#viewer" aria-label="Просмотр"><ui-icon name="viewer"></ui-icon></a>
                <a href="#chrome" aria-label="Chrome"><ui-icon name="chrome"></ui-icon></a>
                <a href="#hex" aria-label="Hex"><ui-icon name="hex"></ui-icon></a>
                <button class="more">»</button>
            </div>
            <task-button icon="chrome">Где сделать диагности...</task-button>
            <task-button icon="java">Dialogys</task-button>
            <task-button icon="pdf">MR453X7962C000.pdf - ...</task-button>
            <task-button icon="search">Результаты поиска</task-button>
            <task-button icon="foxit" active>MR453X7917B000.pdf...</task-button>
            <task-button icon="paint">Безымянный - Paint</task-button>
            <span class="lang">EN</span>
            <div class="tray"><b>«</b><ui-icon name="signal"></ui-icon><ui-icon name="skype"></ui-icon><time>13:20</time></div>`;
    }
}
customElements.define("task-bar", TaskBar);

class PdfApp extends BaseElement {
    render() {
        this.shadowDOM.innerHTML = `
            <style>
                :host {
                    display: flex;
                    flex-direction: column;
                    height: 100vh;
                }
                main {
                    flex: 1;
                    min-height: 0;
                    display: grid;
                    grid-template: minmax(0, 1fr) / 228px minmax(0, 1fr) 16px;
                    padding-right: 2px;
                }
                .view {
                    display: grid;
                    min-height: 0;
                    padding: 0 4px 0 8px;
                    background: #808080;
                }
            </style>
            <title-bar>MR453X7917B000.pdf - Foxit Phantom - [MR453X7917B000.pdf]</title-bar>
            <menu-bar></menu-bar>
            <tool-bars></tool-bars>
            <doc-tabs></doc-tabs>
            <main>
                <bookmark-panel></bookmark-panel>
                <div class="view"><pdf-page></pdf-page></div>
                <scroll-bar before="449" size="8" after="118"></scroll-bar>
            </main>
            <status-bar></status-bar>
            <task-bar></task-bar>`;
    }
}
customElements.define("pdf-app", PdfApp);
</script>
</body>
</html>
